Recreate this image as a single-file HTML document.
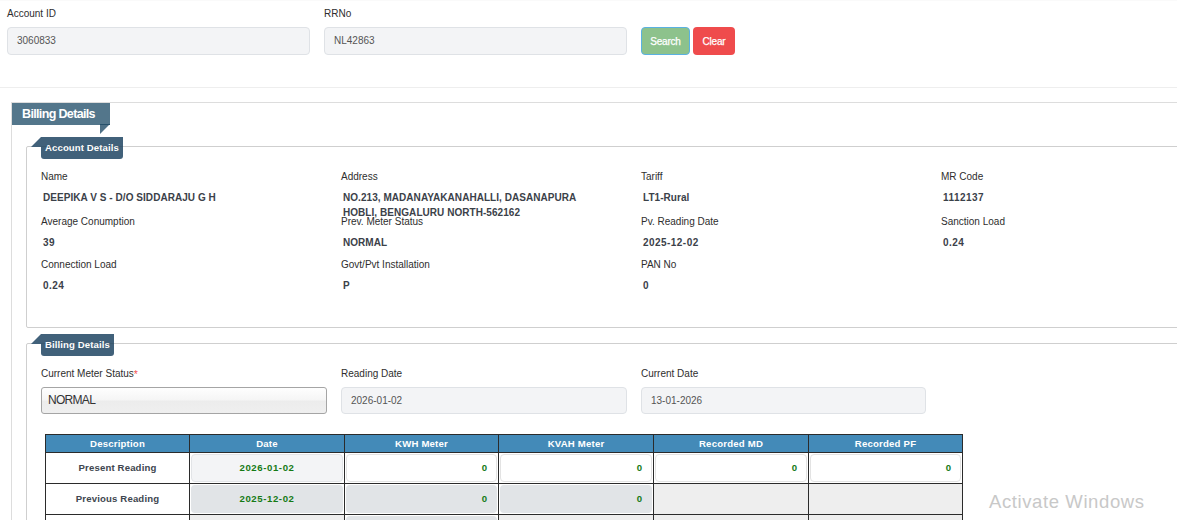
<!DOCTYPE html>
<html><head><meta charset="utf-8">
<style>
*{box-sizing:border-box;margin:0;padding:0}
html,body{width:1177px;height:520px;overflow:hidden;background:#fff;font-family:"Liberation Sans",sans-serif;color:#333;position:relative}
.a{position:absolute;white-space:nowrap}
.lbl{font-size:10px;color:#2e2e2e;line-height:12px;letter-spacing:0px}
.val{font-size:10px;font-weight:bold;color:#3b4149;line-height:12px;letter-spacing:0.05px}
.num{letter-spacing:0.45px}
.inp{position:absolute;background:#f3f4f6;border:1px solid #dfe2e6;border-radius:4px}
.inp span{position:absolute;font-size:10px;color:#555;line-height:12px;letter-spacing:0px}
.hdr{position:absolute;color:#fff;font-weight:bold}
.th{color:#fff;font-weight:bold;font-size:9.6px;text-align:center;line-height:17px;letter-spacing:0.2px}
.td{color:#40464f;font-weight:bold;font-size:9.6px;text-align:center;letter-spacing:0.15px}
.ti{border-radius:4px}
.gc{left:0;right:0 !important;text-align:center;letter-spacing:0.6px}
.g{position:absolute;right:9px;top:7px;color:#157a15;font-weight:bold;font-size:9.6px;line-height:12px}

</style></head><body>
<!-- top search -->
<div class="a" style="left:0;top:0;width:1177px;height:1px;background:#fafafa"></div>
<div class="a lbl" style="left:7px;top:8px">Account ID</div>
<div class="inp" style="left:7px;top:27px;width:303px;height:28px"><span style="left:9px;top:7px">3060833</span></div>
<div class="a lbl" style="left:324px;top:8px">RRNo</div>
<div class="inp" style="left:324px;top:27px;width:303px;height:28px"><span style="left:9px;top:7px">NL42863</span></div>
<div class="a" style="left:641px;top:27px;width:49px;height:28px;background:#8dc28c;border:1px solid #5ab1e2;border-radius:4px;color:#fff;font-size:10px;text-align:center;line-height:27px;letter-spacing:-0.2px;-webkit-text-stroke:0.25px #fff">Search</div>
<div class="a" style="left:693px;top:27px;width:42px;height:28px;background:#ef4b4c;border-radius:4px;color:#fff;font-size:10px;text-align:center;line-height:29px;letter-spacing:-0.2px;-webkit-text-stroke:0.25px #fff">Clear</div>
<div class="a" style="left:0;top:87px;width:1177px;height:1px;background:#eee"></div>

<!-- outer panel -->
<div class="a" style="left:11px;top:102px;width:1200px;height:500px;border:1px solid #ddd"></div>
<div class="hdr" style="left:12px;top:103px;width:98px;height:22px;background:#53768b;font-size:12.5px;line-height:22px;padding-left:10px;letter-spacing:-0.65px">Billing Details</div>
<svg class="a" style="left:100px;top:124px" width="10" height="10"><polygon points="0,0 10,0 0,10" fill="#4e7086"/><rect x="0" y="0" width="10" height="1" fill="#26506a"/></svg>

<!-- inner panel 1 -->
<div class="a" style="left:26px;top:146px;width:1200px;height:182px;border:1px solid #cfcfcf;border-radius:2px"></div>
<div class="hdr" style="left:41px;top:137px;width:82px;height:22px;background:#41617a;border-radius:0 0 3px 3px;font-size:9.6px;line-height:22px;padding-left:4px;letter-spacing:0.1px">Account Details</div>
<div class="a" style="left:41px;top:146px;width:82px;height:1px;background:rgba(0,0,0,0.08)"></div>
<svg class="a" style="left:31px;top:137px" width="10" height="10"><polygon points="0,10 10,0 10,10" fill="#41617a"/></svg>

<div class="a lbl" style="left:41px;top:171px">Name</div>
<div class="a val" style="left:43px;top:192px">DEEPIKA V S - D/O SIDDARAJU G H</div>
<div class="a lbl" style="left:41px;top:216px">Average Conumption</div>
<div class="a val num" style="left:43px;top:237px">39</div>
<div class="a lbl" style="left:41px;top:259px">Connection Load</div>
<div class="a val num" style="left:43px;top:280px">0.24</div>

<div class="a lbl" style="left:341px;top:171px">Address</div>
<div class="a val" style="left:343px;top:192px">NO.213, MADANAYAKANAHALLI, DASANAPURA</div>
<div class="a val" style="left:343px;top:207px">HOBLI, BENGALURU NORTH-562162</div>
<div class="a lbl" style="left:341px;top:216px">Prev. Meter Status</div>
<div class="a val" style="left:343px;top:237px">NORMAL</div>
<div class="a lbl" style="left:341px;top:259px">Govt/Pvt Installation</div>
<div class="a val" style="left:343px;top:280px">P</div>

<div class="a lbl" style="left:641px;top:171px">Tariff</div>
<div class="a val" style="left:643px;top:192px">LT1-Rural</div>
<div class="a lbl" style="left:641px;top:216px">Pv. Reading Date</div>
<div class="a val num" style="left:643px;top:237px">2025-12-02</div>
<div class="a lbl" style="left:641px;top:259px">PAN No</div>
<div class="a val num" style="left:643px;top:280px">0</div>

<div class="a lbl" style="left:941px;top:171px">MR Code</div>
<div class="a val num" style="left:943px;top:192px">1112137</div>
<div class="a lbl" style="left:941px;top:216px">Sanction Load</div>
<div class="a val num" style="left:943px;top:237px">0.24</div>

<!-- inner panel 2 -->
<div class="a" style="left:26px;top:343px;width:1200px;height:300px;border:1px solid #cfcfcf;border-radius:2px"></div>
<div class="hdr" style="left:41px;top:334px;width:73px;height:22px;background:#41617a;border-radius:0 0 3px 3px;font-size:9.6px;line-height:22px;padding-left:4px;letter-spacing:0.1px">Billing Details</div>
<div class="a" style="left:41px;top:343px;width:73px;height:1px;background:rgba(0,0,0,0.08)"></div>
<svg class="a" style="left:31px;top:334px" width="10" height="10"><polygon points="0,10 10,0 10,10" fill="#41617a"/></svg>

<div class="a lbl" style="left:41px;top:368px">Current Meter Status<span style="color:#f25555;font-size:10.5px;line-height:0;position:relative;top:0.5px">*</span></div>
<div class="a" style="left:41px;top:387px;width:286px;height:27px;border:1px solid #a5a5a5;border-radius:3px;background:linear-gradient(#fefefe 0%,#f5f5f5 48%,#ececec 52%,#efefef 100%)"><span class="a" style="left:6px;top:5px;font-size:12px;color:#333;line-height:14px;letter-spacing:-0.7px">NORMAL</span></div>
<div class="a lbl" style="left:341px;top:368px">Reading Date</div>
<div class="inp" style="left:341px;top:387px;width:286px;height:27px"><span style="left:9px;top:7px">2026-01-02</span></div>
<div class="a lbl" style="left:641px;top:368px">Current Date</div>
<div class="inp" style="left:641px;top:387px;width:285px;height:27px"><span style="left:9px;top:7px">13-01-2026</span></div>

<!-- table -->
<div class="a" style="left:45px;top:434px;width:918px;height:18px;background:#438ab8"></div>
<div class="a th" style="left:46px;top:435px;width:143px">Description</div>
<div class="a th" style="left:190px;top:435px;width:154px">Date</div>
<div class="a th" style="left:345px;top:435px;width:153px">KWH Meter</div>
<div class="a th" style="left:499px;top:435px;width:154px">KVAH Meter</div>
<div class="a th" style="left:654px;top:435px;width:154px">Recorded MD</div>
<div class="a th" style="left:809px;top:435px;width:153px">Recorded PF</div>
<div class="a td" style="left:46px;top:453px;width:143px;line-height:30px">Present Reading</div>
<div class="a ti" style="left:191px;top:454px;width:152px;height:28px;background:#f3f4f6;border:1px solid #e2e4e7;"><span class="g gc">2026-01-02</span></div>
<div class="a ti" style="left:346px;top:454px;width:151px;height:28px;background:#fff;border:1px solid #e3e3e3;"><span class="g">0</span></div>
<div class="a ti" style="left:500px;top:454px;width:152px;height:28px;background:#fff;border:1px solid #e3e3e3;"><span class="g">0</span></div>
<div class="a ti" style="left:655px;top:454px;width:152px;height:28px;background:#fff;border:1px solid #e3e3e3;"><span class="g">0</span></div>
<div class="a ti" style="left:810px;top:454px;width:151px;height:28px;background:#fff;border:1px solid #e3e3e3;"><span class="g">0</span></div>
<div class="a td" style="left:46px;top:484px;width:143px;line-height:30px">Previous Reading</div>
<div class="a ti" style="left:191px;top:485px;width:152px;height:28px;background:#e1e4e7;"><span class="g gc" style="top:8px">2025-12-02</span></div>
<div class="a ti" style="left:346px;top:485px;width:151px;height:28px;background:#e1e4e7;"><span class="g" style="right:10px;top:8px">0</span></div>
<div class="a ti" style="left:500px;top:485px;width:152px;height:28px;background:#e1e4e7;"><span class="g" style="right:10px;top:8px">0</span></div>
<div class="a" style="left:654px;top:484px;width:154px;height:30px;background:#eee"></div>
<div class="a" style="left:809px;top:484px;width:153px;height:30px;background:#eee"></div>
<div class="a" style="left:190px;top:515px;width:154px;height:30px;background:#eee"></div>
<div class="a ti" style="left:346px;top:516px;width:151px;height:28px;background:#e1e4e7;"></div>
<div class="a" style="left:499px;top:515px;width:154px;height:30px;background:#eee"></div>
<div class="a" style="left:654px;top:515px;width:154px;height:30px;background:#eee"></div>
<div class="a" style="left:809px;top:515px;width:153px;height:30px;background:#eee"></div>
<div class="a" style="left:45px;top:434px;width:1px;height:111px;background:#2b2b2b"></div>
<div class="a" style="left:189px;top:434px;width:1px;height:111px;background:#2b2b2b"></div>
<div class="a" style="left:344px;top:434px;width:1px;height:111px;background:#2b2b2b"></div>
<div class="a" style="left:498px;top:434px;width:1px;height:111px;background:#2b2b2b"></div>
<div class="a" style="left:653px;top:434px;width:1px;height:111px;background:#2b2b2b"></div>
<div class="a" style="left:808px;top:434px;width:1px;height:111px;background:#2b2b2b"></div>
<div class="a" style="left:962px;top:434px;width:1px;height:111px;background:#2b2b2b"></div>
<div class="a" style="left:45px;top:434px;width:918px;height:1px;background:#2b2b2b"></div>
<div class="a" style="left:45px;top:452px;width:918px;height:1px;background:#2b2b2b"></div>
<div class="a" style="left:45px;top:483px;width:918px;height:1px;background:#2b2b2b"></div>
<div class="a" style="left:45px;top:514px;width:918px;height:1px;background:#2b2b2b"></div>
<div class="a" style="left:45px;top:545px;width:918px;height:1px;background:#2b2b2b"></div>

<div class="a" style="left:989px;top:491px;font-size:18.5px;line-height:21px;letter-spacing:0.6px;color:#c8c8c8">Activate Windows</div>
<div class="a" style="left:990px;top:517px;font-size:13px;line-height:15px;color:#c8c8c8">Go to Settings to activate Windows.</div>
</body></html>
